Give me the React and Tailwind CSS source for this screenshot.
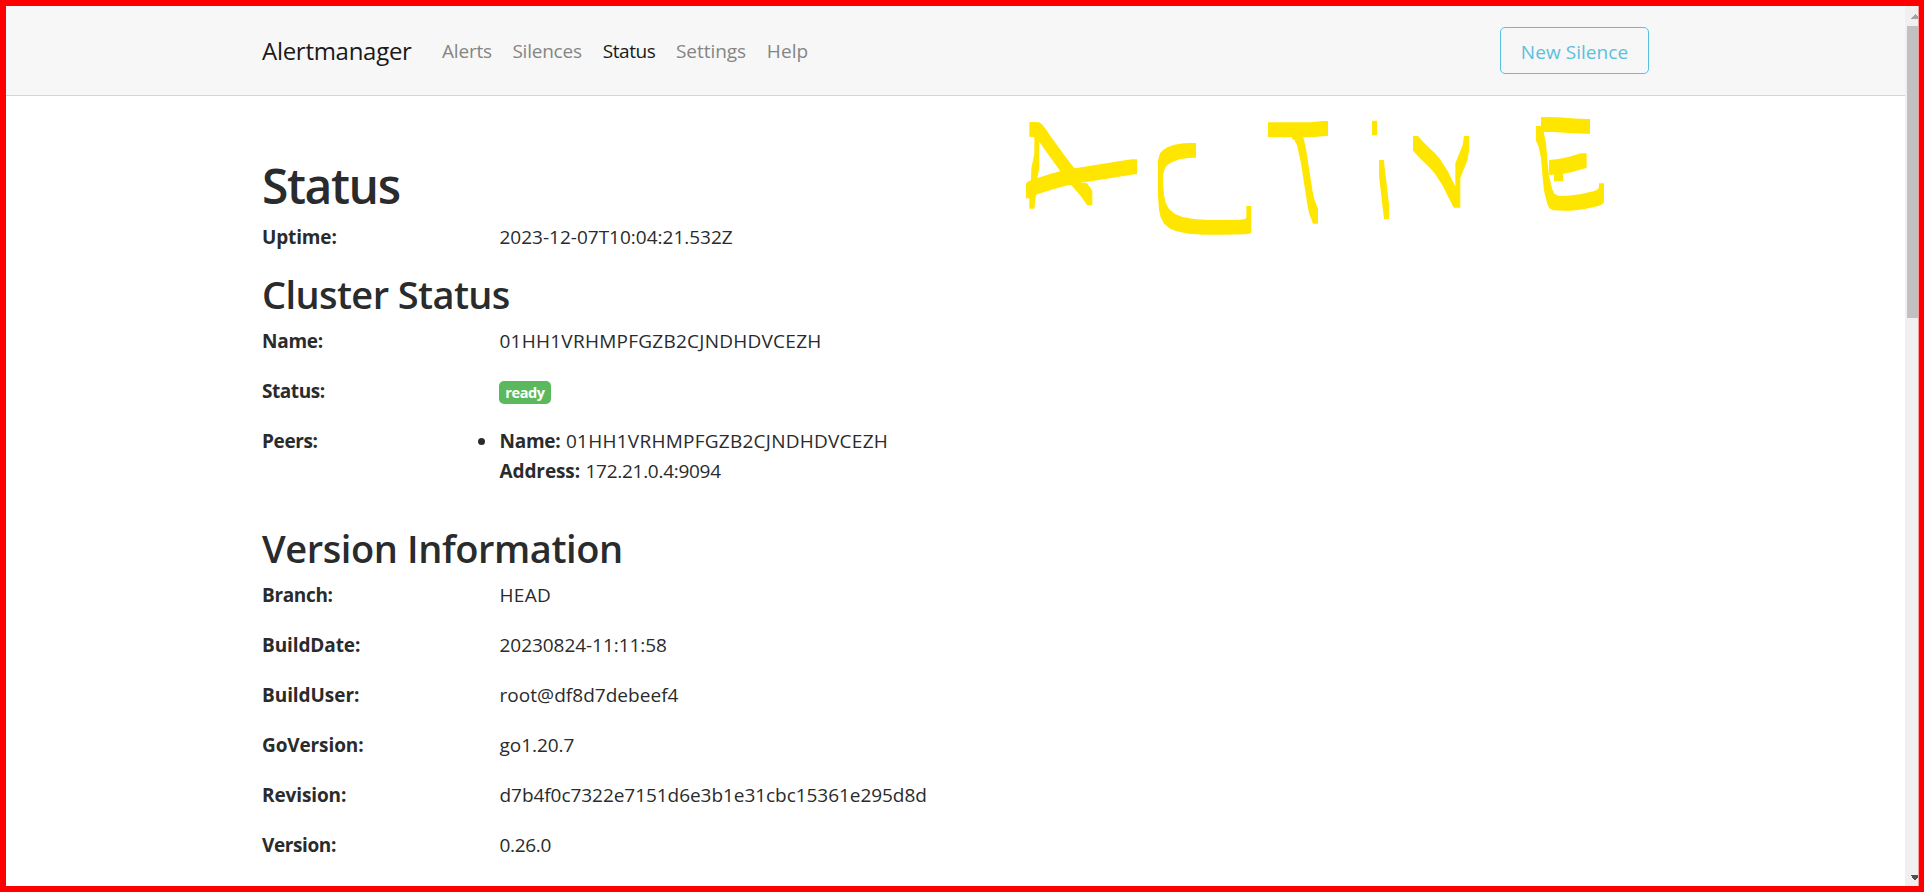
import React from "react";

const navLinks = [
  { label: "Alerts", cls: "w-[70.4px] tracking-[-0.2px] text-[#858585]" },
  { label: "Silences", cls: "w-[90.3px] tracking-[-0.23px] text-[#858585]" },
  { label: "Status", cls: "w-[73.3px] tracking-[-0.4px] text-[#1a1a1a]" },
  { label: "Settings", cls: "w-[90.8px] tracking-[-0.05px] text-[#858585]" },
  { label: "Help", cls: "tracking-[0.1px] text-[#858585]" },
];

const versionRows = [
  ["Branch:", "tracking-[-0.35px]", "HEAD", "tracking-[0.3px]"],
  ["BuildDate:", "tracking-[-0.1px]", "20230824-11:11:58", "tracking-[-0.05px]"],
  ["BuildUser:", "tracking-[-0.06px]", "root@df8d7debeef4", "tracking-[0.04px]"],
  ["GoVersion:", "tracking-[-0.12px]", "go1.20.7", "tracking-[-0.05px]"],
  ["Revision:", "tracking-[-0.11px]", "d7b4f0c7322e7151d6e3b1e31cbc15361e295d8d", "tracking-[-0.05px]"],
  ["Version:", "tracking-[-0.39px]", "0.26.0", "tracking-[-0.31px]"],
];

// Marker strokes: top-left positions of a 15x44 rectangular nib, in thirds of a pixel.
const strokes = [
  [[58, 66], [72, 67], [80, 72], [90, 84], [110, 113], [150, 168], [179, 206], [212, 244], [232, 272]],
  [[73, 80], [73, 161], [64, 205], [63, 240], [58, 282]],
  [[48, 251], [52, 246], [62, 241], [85, 233], [120, 222], [150, 214], [195, 205], [345, 181], [366, 178]],
  [[543, 129], [520, 130], [493, 134], [474, 141], [460, 149], [450, 160], [444, 180], [444, 245], [447, 285], [452, 308], [462, 327], [480, 342], [500, 350], [535, 357], [580, 360], [625, 360], [690, 359], [705, 357], [709, 352], [709, 318]],
  [[774, 67], [900, 67], [939, 63]],
  [[846, 72], [853, 76], [861, 92], [873, 146], [882, 205], [893, 275], [898, 298], [909, 327]],
  [[1086, 62], [1086, 62]],
  [[1107, 180], [1108, 194], [1113, 235], [1117, 270], [1122, 313]],
  [[1209, 108], [1230, 131], [1260, 160], [1275, 177], [1298, 213], [1331, 279], [1336, 279], [1336, 190], [1342, 175], [1358, 135], [1362, 108]],
  [[1593, 51], [1630, 52], [1690, 56], [1725, 57]],
  [[1578, 78], [1586, 96], [1593, 130], [1598, 190], [1602, 228], [1612, 268], [1618, 281], [1630, 287], [1668, 288], [1710, 283], [1750, 274], [1762, 269], [1767, 262], [1767, 250]],
  [[1617, 180], [1645, 177], [1675, 171], [1705, 162], [1715, 160]],
  [[1632, 200], [1644, 200]],
];

function sweep([ax, ay], [bx, by]) {
  const w = 15;
  const h = 44;
  const [x0, y0, x1, y1] = ax <= bx ? [ax, ay, bx, by] : [bx, by, ax, ay];
  return y1 >= y0
    ? `M${x0} ${y0}H${x0 + w}L${x1 + w} ${y1}V${y1 + h}H${x1}L${x0} ${y0 + h}Z`
    : `M${x0} ${y0}L${x1} ${y1}H${x1 + w}V${y1 + h}L${x0 + w} ${y0 + h}H${x0}Z`;
}

function Marker() {
  const d = strokes
    .map((pts) => pts.slice(1).map((p, i) => sweep(pts[i], p)).join(""))
    .join("");
  return (
    <svg
      className="pointer-events-none absolute left-[1010px] top-[100px] h-[150px] w-[620px]"
      viewBox="0 0 1860 450"
      role="img"
    >
      <path d={d} fill="#ffe600" fillRule="nonzero" />
    </svg>
  );
}

function Row({ label, labelCls, children, valueCls = "" }) {
  return (
    <div className="mb-5 flex leading-[30px]">
      <div className={`w-[237.5px] shrink-0 font-bold ${labelCls}`}>{label}</div>
      <div className={valueCls}>{children}</div>
    </div>
  );
}

export default function App() {
  return (
    <div className="relative flex h-[892px] w-[1924px] overflow-hidden border-6 border-r-5 border-[#ff0000] bg-white font-['Open_Sans','Noto_Sans',sans-serif] text-[19px] text-[#292b2c]">
      <div className="flex min-w-0 flex-1 flex-col">
        <nav className="flex h-[90px] shrink-0 items-start border-b border-[#d5d5d5] bg-[#f7f7f7] pl-64 pr-[256px]">
          <div className="mt-[28px] w-[180px] text-[24px] leading-[34px] tracking-[-0.28px] text-[#1a1a1a]">
            Alertmanager
          </div>
          <div className="mt-[30px] flex leading-[30px]">
            {navLinks.map((l) => (
              <a key={l.label} className={l.cls}>
                {l.label}
              </a>
            ))}
          </div>
          <button className="ml-auto mt-[21px] flex h-[47px] w-[149px] justify-center rounded-[5px] border border-[#5bc0de] pt-[9px] leading-[30px] tracking-[0.06px] text-[#5bc0de]">
            New Silence
          </button>
        </nav>

        <main className="pl-64 pt-[62px]">
          <h1 className="mb-2 text-[48px] font-semibold leading-[56px] tracking-[-1.4px]">Status</h1>
          <Row label="Uptime:" labelCls="tracking-[-0.15px]">
            2023-12-07T10:04:21.532Z
          </Row>

          <h2 className="mb-2.5 text-[38px] font-semibold leading-[44px] tracking-[-0.6px]">Cluster Status</h2>
          <Row label="Name:" labelCls="tracking-[-0.25px]" valueCls="tracking-[0.25px]">
            01HH1VRHMPFGZB2CJNDHDVCEZH
          </Row>
          <Row label="Status:" labelCls="tracking-[-0.45px]">
            <span className="-ml-[0.5px] mt-[5px] flex h-[23px] w-[52px] items-center justify-center rounded-[5px] bg-[#5cb85c] text-[14.5px] font-bold leading-[23px] tracking-[-0.4px] text-white">
              ready
            </span>
          </Row>
          <div className="pb-5">
            <Row label="Peers:" labelCls="tracking-[-0.39px]">
              <ul>
                <li className="relative">
                  <span className="absolute left-[-22px] top-[12px] size-[7px] rounded-full bg-[#292b2c]" />
                  <div className="flex">
                    <b className="w-[66.5px] tracking-[-0.25px]">Name:</b>
                    <span className="tracking-[0.25px]">01HH1VRHMPFGZB2CJNDHDVCEZH</span>
                  </div>
                  <div className="flex">
                    <b className="w-[86px] tracking-[-0.1px]">Address:</b>
                    <span className="tracking-[-0.28px]">172.21.0.4:9094</span>
                  </div>
                </li>
              </ul>
            </Row>
          </div>

          <h2 className="mb-2.5 text-[38px] font-semibold leading-[44px] tracking-[-0.41px]">Version Information</h2>
          {versionRows.map(([label, labelCls, value, valueCls]) => (
            <Row key={label} label={label} labelCls={labelCls} valueCls={valueCls}>
              {value}
            </Row>
          ))}
        </main>
      </div>

      <div className="flex w-[14px] shrink-0 flex-col border-r border-[#f89c9c] bg-[#f0f0f0]">
        <svg className="h-5 w-[13px]" viewBox="0 0 13 20" shapeRendering="crispEdges">
          <path d="M10 8h1v1h1v1h1v3H6v-1h1v-1h1v-1h1v-1h1z" fill="#a3a3a3" />
        </svg>
        <div className="ml-[2px] h-[292px] bg-[#c1c1c1]" />
        <svg className="mt-auto h-5 w-[13px]" viewBox="0 0 13 20" shapeRendering="crispEdges">
          <path d="M6 9h7v3h-1v1h-1v1h-2v-1H8v-1H7v-2H6z" fill="#505050" />
        </svg>
      </div>

      <div className="absolute left-[-6px] top-[-6px]">
        <Marker />
      </div>
    </div>
  );
}
